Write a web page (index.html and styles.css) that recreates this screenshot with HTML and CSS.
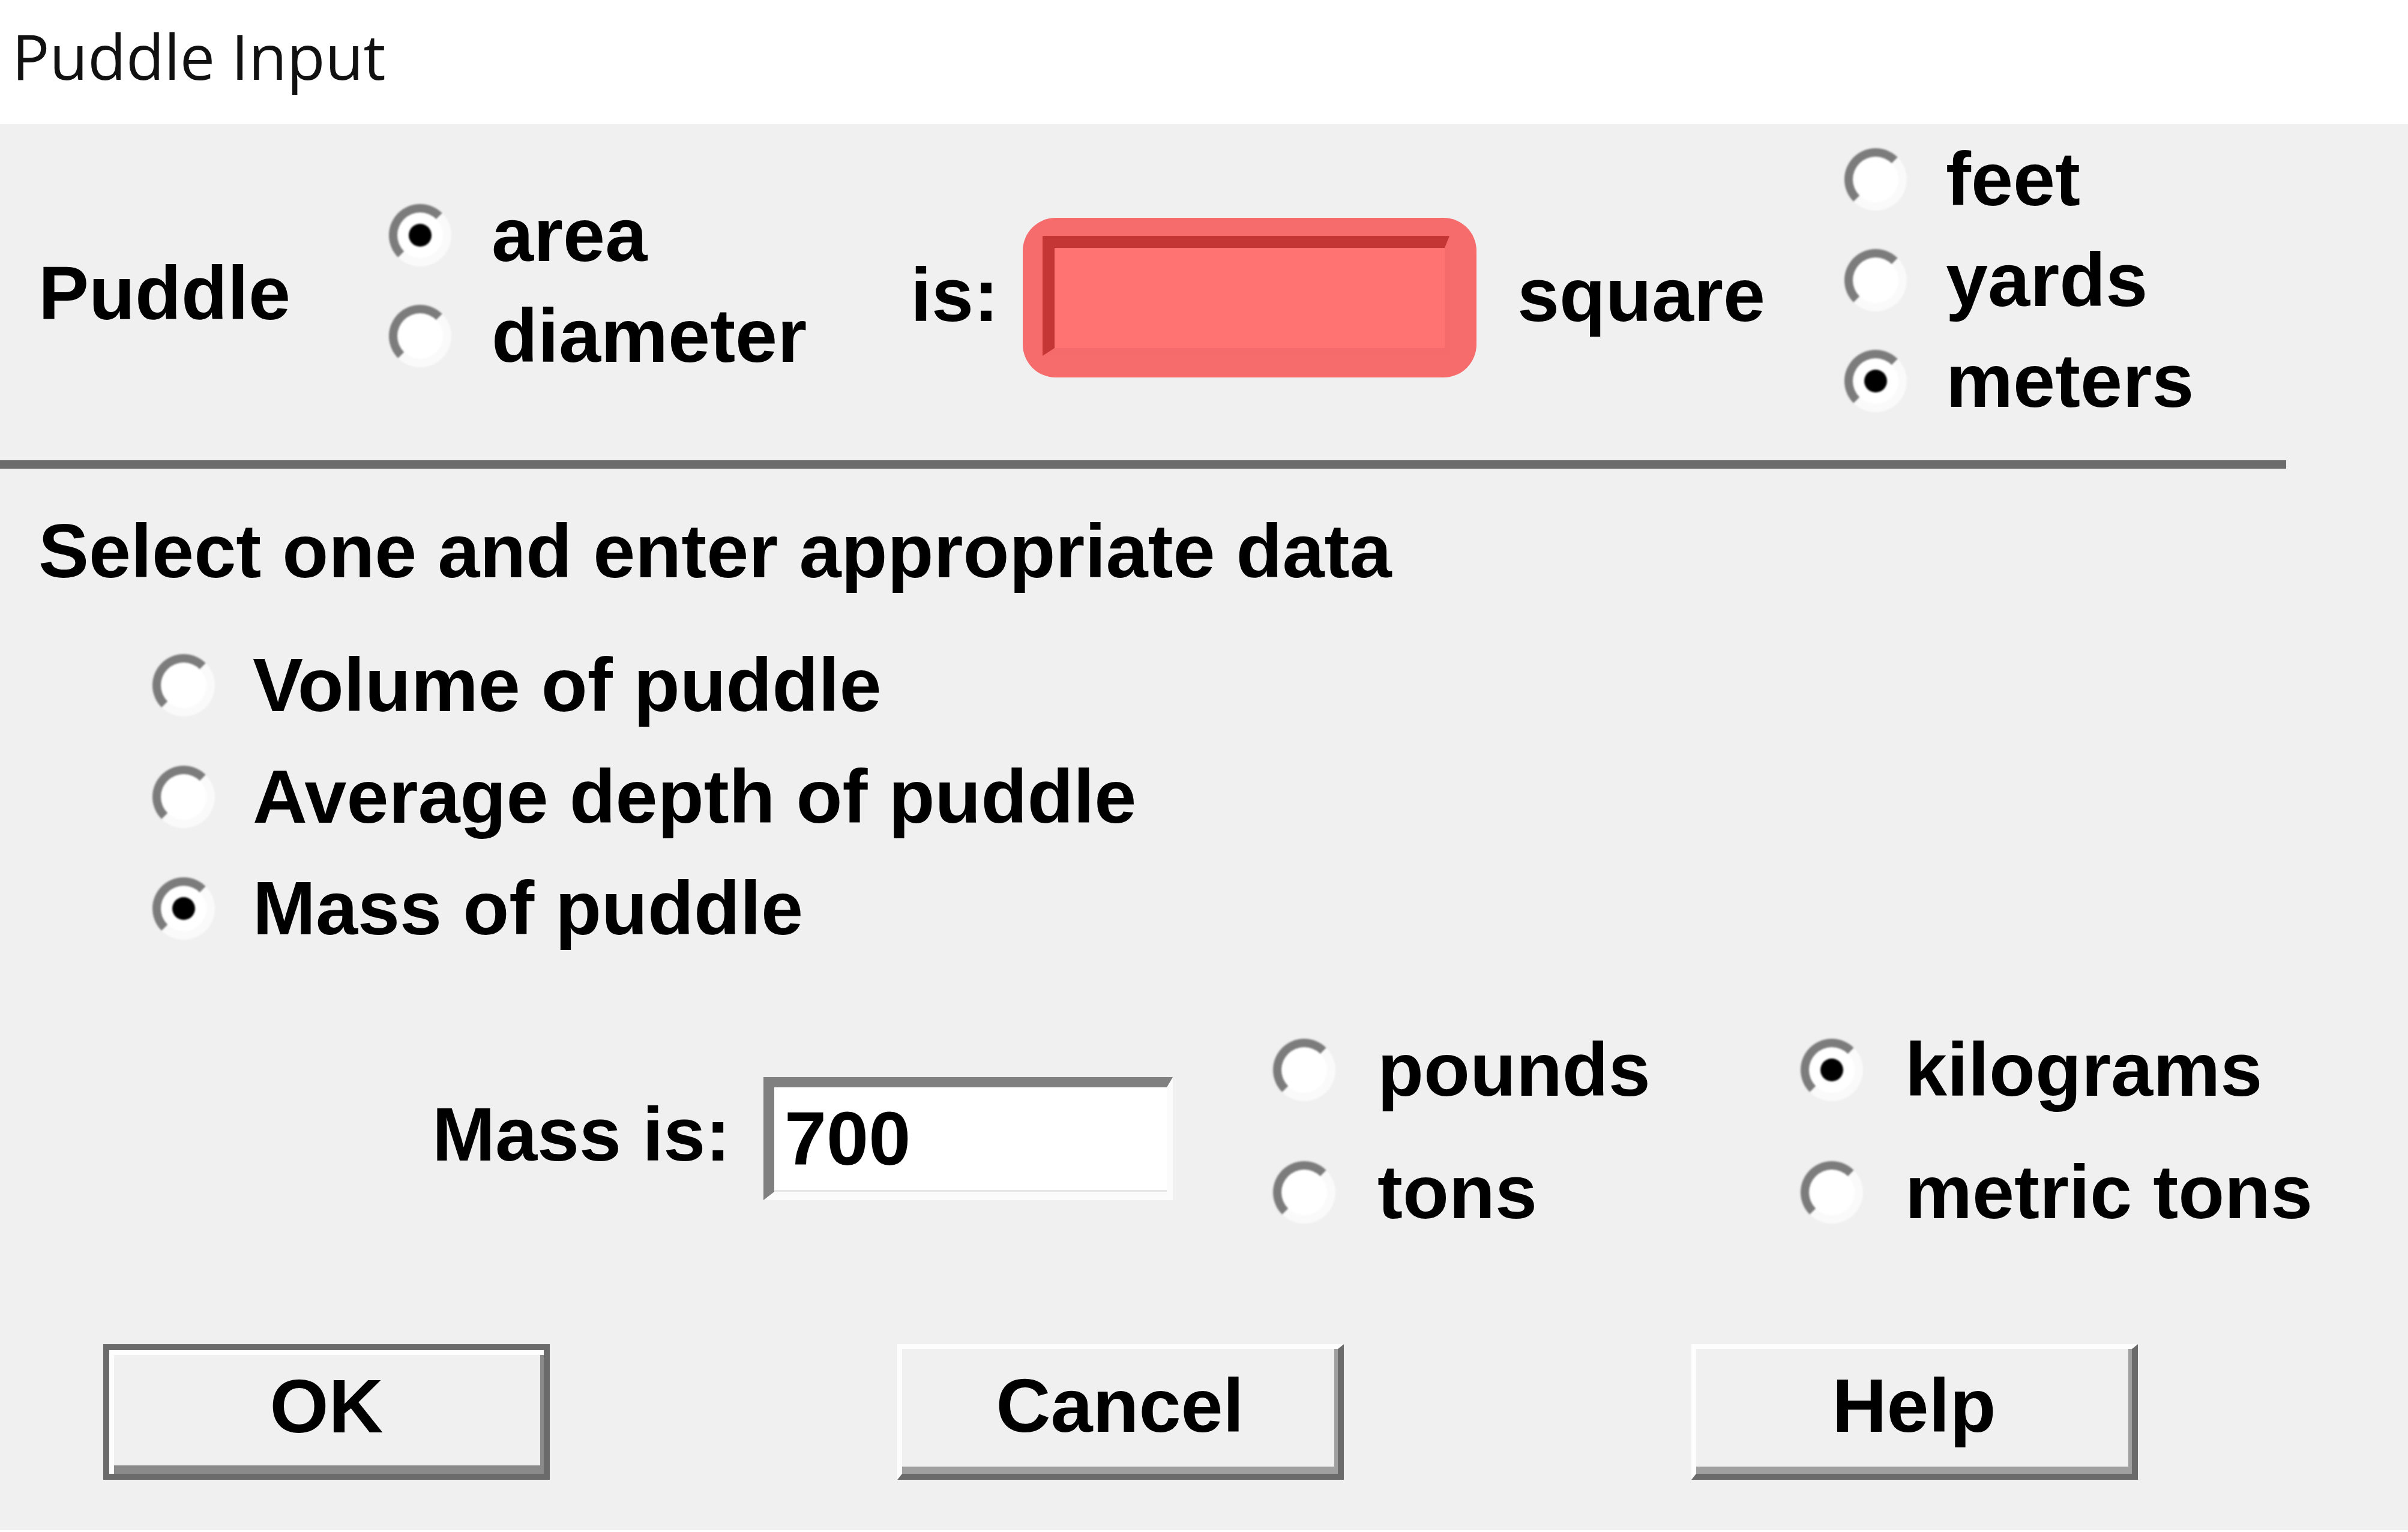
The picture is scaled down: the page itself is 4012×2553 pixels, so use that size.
FILE: index.html
```html
<!DOCTYPE html>
<html>
<head>
<meta charset="utf-8">
<title>Puddle Input</title>
<link rel="stylesheet" href="styles.css">
</head>
<body>
<div class="titlebar">Puddle Input</div>
<div class="dialog">
  <div class="top">
    <div class="lbl puddle">Puddle</div>
    <div class="group group1">
      <div class="opt"><span class="radio on"></span><span>area</span></div>
      <div class="opt"><span class="radio"></span><span>diameter</span></div>
    </div>
    <div class="lbl is">is:</div>
    <div class="redbox"><div class="sunken"></div></div>
    <div class="lbl square">square</div>
    <div class="group group2">
      <div class="opt"><span class="radio"></span><span>feet</span></div>
      <div class="opt"><span class="radio"></span><span>yards</span></div>
      <div class="opt"><span class="radio on"></span><span>meters</span></div>
    </div>
  </div>
  <div class="sep"></div>
  <div class="select">Select one and enter appropriate data</div>
  <div class="choices">
    <div class="opt"><span class="radio"></span><span>Volume of puddle</span></div>
    <div class="opt"><span class="radio"></span><span>Average depth of puddle</span></div>
    <div class="opt"><span class="radio on"></span><span>Mass of puddle</span></div>
  </div>
  <div class="massrow">
    <div class="lbl masslbl">Mass is:</div>
    <div class="textbox">700</div>
    <div class="units">
      <div class="opt"><span class="radio"></span><span>pounds</span></div>
      <div class="opt"><span class="radio on"></span><span>kilograms</span></div>
      <div class="opt"><span class="radio"></span><span>tons</span></div>
      <div class="opt"><span class="radio"></span><span>metric tons</span></div>
    </div>
  </div>
  <div class="buttons">
    <div class="btn default">OK</div>
    <div class="btn">Cancel</div>
    <div class="btn">Help</div>
  </div>
</div>
</body>
</html>
```

FILE: styles.css
```css
html, body {
  margin: 0;
  padding: 0;
}
body {
  width: 4012px;
  height: 2553px;
  overflow: hidden;
  background: #ffffff;
  font-family: "Liberation Sans", Arial, sans-serif;
  font-weight: bold;
  font-size: 126px;
  line-height: 150px;
  color: #000;
}
.titlebar {
  height: 207px;
  box-sizing: border-box;
  padding: 23px 0 0 20px;
  background: #ffffff;
  font-family: "Open Sans", "Noto Sans", sans-serif;
  font-weight: normal;
  font-size: 104px;
  line-height: 140px;
  color: #111;
}
.dialog {
  height: 2343px;
  background: #f0f0f0;
  overflow: hidden;
}
.top {
  display: flex;
  align-items: flex-start;
  height: 560px;
}
.lbl {
  white-space: nowrap;
  flex-shrink: 0;
}
.puddle {
  margin-left: 64px;
  margin-top: 207px;
  width: 584px;
}
.group {
  display: flex;
  flex-direction: column;
  gap: 18px;
  flex-shrink: 0;
}
.group1 {
  width: 869px;
  margin-top: 110px;
}
.group1 .opt { gap: 67px; }
.is {
  margin-top: 210px;
  width: 187px;
}
.redbox {
  flex-shrink: 0;
  margin-top: 156px;
  width: 756px;
  height: 266px;
  box-sizing: border-box;
  border-radius: 55px;
  background: #f66c6c;
  padding: 30px 45px 36px 33px;
}
.sunken {
  height: 100%;
  box-sizing: border-box;
  background: #ff7373;
  border-style: solid;
  border-width: 20px 8px 13px 20px;
  border-color: #c43636 #f56a6a #f56a6a #c43636;
}
.square {
  margin-left: 68px;
  margin-top: 210px;
  width: 545px;
}
.group2 {
  margin-top: 17px;
}
.group2 .opt { gap: 65px; }
.opt {
  display: flex;
  align-items: center;
  height: 150px;
  white-space: nowrap;
}
.radio {
  flex-shrink: 0;
  width: 104px;
  height: 104px;
  box-sizing: border-box;
  border-radius: 50%;
  border: 14px solid;
  border-color: #7c7c7c #fafafa #fafafa #7c7c7c;
  background: #ffffff;
  display: flex;
  align-items: center;
  justify-content: center;
  filter: blur(1.5px);
}
.radio.on::after {
  content: "";
  width: 38px;
  height: 38px;
  border-radius: 50%;
  background: #000;
}
.sep {
  width: 3809px;
  height: 14px;
  background: #6b6b6b;
}
.select {
  margin: 63px 0 0 64px;
  white-space: nowrap;
}
.choices {
  margin: 73px 0 0 254px;
  display: flex;
  flex-direction: column;
  gap: 36px;
}
.choices .opt { gap: 63px; }
.massrow {
  display: flex;
  align-items: flex-start;
  margin-top: 119px;
  height: 354px;
}
.masslbl {
  margin-left: 720px;
  margin-top: 108px;
  width: 552px;
}
.textbox {
  flex-shrink: 0;
  margin-top: 87px;
  width: 682px;
  height: 205px;
  box-sizing: border-box;
  background: #ffffff;
  border-style: solid;
  border-width: 17px 10px 14px 18px;
  border-color: #808080 #fbfbfb #fbfbfb #808080;
  box-shadow: inset 0 -3px 0 #e6e6e6;
  padding: 11px 0 0 17px;
}
.units {
  margin-left: 167px;
  display: grid;
  grid-template-columns: 879px auto;
  row-gap: 54px;
}
.units .opt { gap: 70px; }
.buttons {
  display: flex;
  margin: 178px 0 0 172px;
  gap: 579px;
}
.btn {
  width: 744px;
  height: 226px;
  box-sizing: border-box;
  display: flex;
  align-items: center;
  justify-content: center;
  background: #f0f0f0;
  border-style: solid;
  border-width: 8px 10px 10px 8px;
  border-color: #fdfdfd #6b6b6b #6b6b6b #fdfdfd;
  box-shadow: inset -6px -12px 0 #a0a0a0;
  padding-bottom: 18px;
}
.btn.default {
  border-width: 10px;
  border-color: #6b6b6b;
  box-shadow: inset 8px 8px 0 #fdfdfd, inset -6px -14px 0 #8a8a8a;
}
```
